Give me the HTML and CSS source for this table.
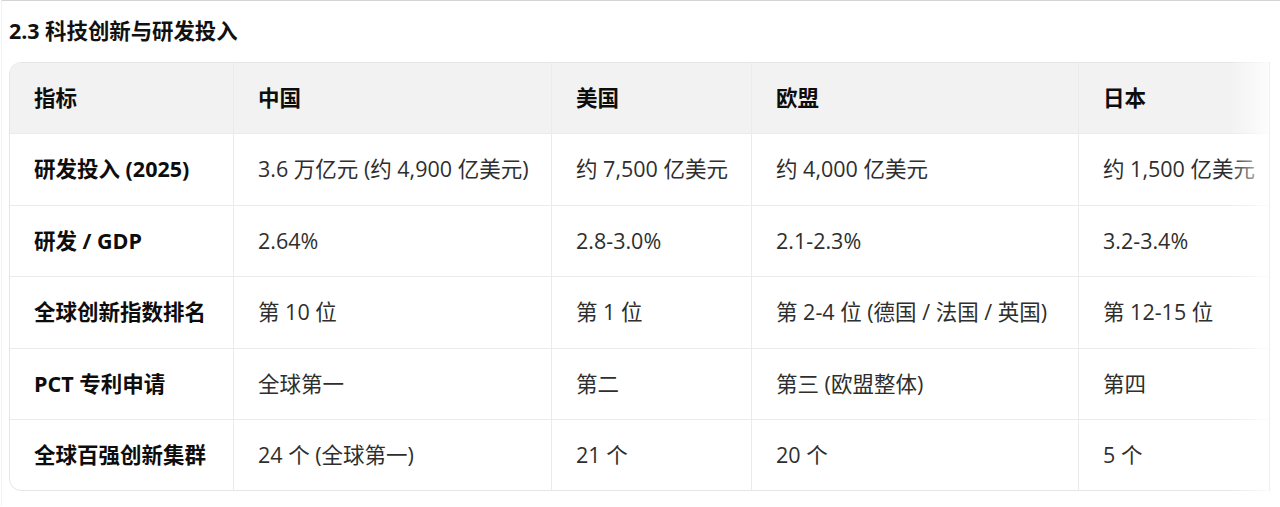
FILE: index.html
```html
<!DOCTYPE html>
<html lang="zh-CN">
<head>
<meta charset="utf-8">
<title>2.3 科技创新与研发投入</title>
<link rel="stylesheet" href="styles.css">
</head>
<body>
<div class="page">
  <h3 class="title">2.3 科技创新与研发投入</h3>
  <div class="table-wrap">
    <div class="scroller">
      <table class="data">
        <colgroup>
          <col class="c1"><col class="c2"><col class="c3"><col class="c4"><col class="c5">
        </colgroup>
        <thead>
          <tr><th>指标</th><th>中国</th><th>美国</th><th>欧盟</th><th>日本</th></tr>
        </thead>
        <tbody>
          <tr><td class="key">研发投入 (2025)</td><td>3.6 万亿元 (约 4,900 亿美元)</td><td>约 7,500 亿美元</td><td>约 4,000 亿美元</td><td>约 1,500 亿美元</td></tr>
          <tr><td class="key">研发 / GDP</td><td>2.64%</td><td>2.8-3.0%</td><td>2.1-2.3%</td><td>3.2-3.4%</td></tr>
          <tr><td class="key">全球创新指数排名</td><td>第 10 位</td><td>第 1 位</td><td>第 2-4 位 (德国 / 法国 / 英国)</td><td>第 12-15 位</td></tr>
          <tr><td class="key">PCT 专利申请</td><td>全球第一</td><td>第二</td><td>第三 (欧盟整体)</td><td>第四</td></tr>
          <tr><td class="key">全球百强创新集群</td><td>24 个 (全球第一)</td><td>21 个</td><td>20 个</td><td>5 个</td></tr>
        </tbody>
      </table>
    </div>
    <div class="fade"></div>
  </div>
</div>
</body>
</html>
```

FILE: styles.css
```css
html, body {
  margin: 0;
  padding: 0;
  background: #ffffff;
}
body {
  font-family: "Open Sans", "Noto Sans CJK SC", sans-serif;
  color: #2b2b2b;
}
.page {
  border-top: 1px solid #d4d4d4;
  border-left: 1px solid #f2f2f2;
  margin-left: 1px;
  padding: 15px 0 0 7px;
  height: 506px;
  box-sizing: border-box;
}
.title {
  margin: 0 0 16px 0;
  font-size: 21.4px;
  line-height: 30px;
  font-weight: 700;
  color: #111111;
}
.table-wrap {
  position: relative;
  width: 1261px;
}
.scroller {
  overflow: hidden;
  width: 100%;
}
.data {
  table-layout: fixed;
  width: 1301px;
  border-collapse: separate;
  border-spacing: 0;
  border: 1px solid #e6e6e6;
  border-radius: 12px;
  font-size: 21.5px;
  line-height: 30.4px;
}
.c1 { width: 224px; }
.c2 { width: 318px; }
.c3 { width: 200px; }
.c4 { width: 327px; }
.c5 { width: 230px; }
.data th,
.data td {
  padding: 20px 24px;
  text-align: left;
  border-right: 1px solid #ebebeb;
  border-bottom: 1px solid #ebebeb;
  white-space: nowrap;
}
.data th:last-child,
.data td:last-child {
  border-right: none;
}
.data tbody tr:last-child td {
  border-bottom: none;
}
.data th {
  background: #f2f2f2;
  font-weight: 700;
  color: #0d0d0d;
}
.data th:first-child { border-top-left-radius: 11px; }
.data tbody tr:last-child td:first-child { border-bottom-left-radius: 11px; }
.data td {
  color: #2e2e2e;
}
.data td.key {
  font-weight: 700;
  color: #0d0d0d;
}
.fade {
  position: absolute;
  top: 0;
  right: 0;
  width: 40px;
  height: 100%;
  background: linear-gradient(to right, rgba(255,255,255,0), rgba(255,255,255,0.85));
  border-right: 1px solid #efefef;
  pointer-events: none;
}
```
